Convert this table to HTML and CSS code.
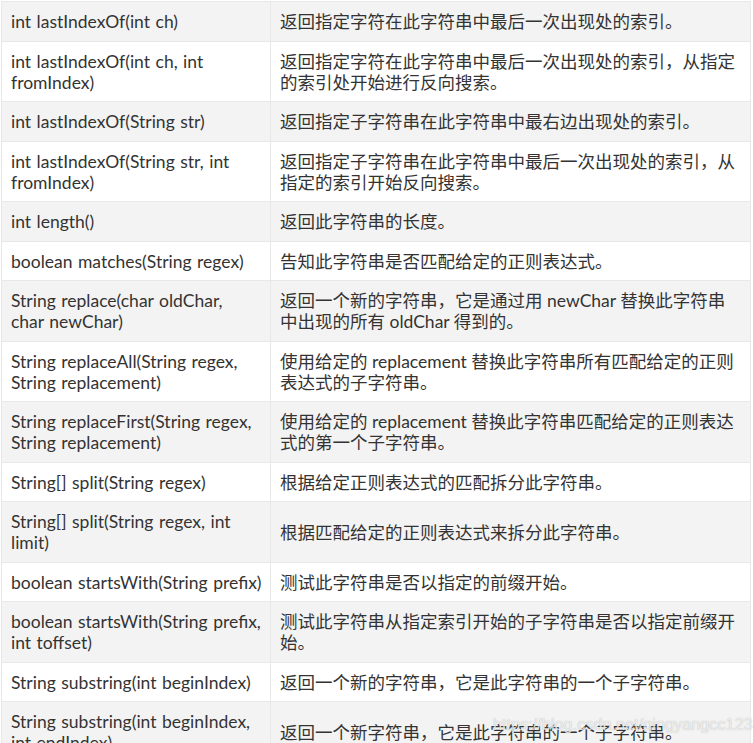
FILE: index.html
```html
<!DOCTYPE html>
<html lang="zh-CN">
<head>
    <meta charset="UTF-8">
    <title>String 方法</title>
    <link rel="stylesheet" href="styles.css">
</head>
<body>
    <div class="page">
        <table class="methods">
            <tbody>
                <tr><td>int lastIndexOf(int ch)</td><td>返回指定字符在此字符串中最后一次出现处的索引。</td></tr>
                <tr><td>int lastIndexOf(int ch, int<br>fromIndex)</td><td>返回指定字符在此字符串中最后一次出现处的索引，从指定的索引处开始进行反向搜索。</td></tr>
                <tr><td>int lastIndexOf(String str)</td><td>返回指定子字符串在此字符串中最右边出现处的索引。</td></tr>
                <tr><td>int lastIndexOf(String str, int<br>fromIndex)</td><td>返回指定子字符串在此字符串中最后一次出现处的索引，从指定的索引开始反向搜索。</td></tr>
                <tr><td>int length()</td><td>返回此字符串的长度。</td></tr>
                <tr><td>boolean matches(String regex)</td><td>告知此字符串是否匹配给定的正则表达式。</td></tr>
                <tr><td>String replace(char oldChar,<br>char newChar)</td><td>返回一个新的字符串，它是通过用 newChar 替换此字符串中出现的所有 oldChar 得到的。</td></tr>
                <tr><td>String replaceAll(String regex,<br>String replacement)</td><td>使用给定的 replacement 替换此字符串所有匹配给定的正则表达式的子字符串。</td></tr>
                <tr><td>String replaceFirst(String regex,<br>String replacement)</td><td>使用给定的 replacement 替换此字符串匹配给定的正则表达式的第一个子字符串。</td></tr>
                <tr><td>String[] split(String regex)</td><td>根据给定正则表达式的匹配拆分此字符串。</td></tr>
                <tr><td>String[] split(String regex, int<br>limit)</td><td>根据匹配给定的正则表达式来拆分此字符串。</td></tr>
                <tr><td>boolean startsWith(String prefix)</td><td>测试此字符串是否以指定的前缀开始。</td></tr>
                <tr><td>boolean startsWith(String prefix,<br>int toffset)</td><td>测试此字符串从指定索引开始的子字符串是否以指定前缀开始。</td></tr>
                <tr><td>String substring(int beginIndex)</td><td>返回一个新的字符串，它是此字符串的一个子字符串。</td></tr>
                <tr><td>String substring(int beginIndex,<br>int endIndex)</td><td>返回一个新字符串，它是此字符串的一个子字符串。</td></tr>
            </tbody>
        </table>
        <div class="watermark">https://blog.csdn.net/qingyangcc123</div>
    </div>
</body>
</html>
```

FILE: styles.css
```css
* {
    margin: 0;
    padding: 0;
    box-sizing: border-box;
}

html, body {
    height: 100%;
    overflow: hidden;
    background: #fff;
}

body {
    font-family: Lato, "Noto Sans CJK SC", sans-serif;
    font-size: 17.5px;
    line-height: 21px;
    color: #333;
}

.page {
    position: relative;
    height: 743px;
    padding: 1px 0 0 1px;
}

.methods {
    width: 750px;
    border-collapse: collapse;
    table-layout: fixed;
}

.methods td {
    border: 1px solid #e8e8e8;
    padding: 9px 9px 8.5px 9px;
    vertical-align: middle;
}

.methods td:first-child {
    width: 269px;
    white-space: nowrap;
    word-spacing: 1px;
}

.methods tr:nth-child(odd) td {
    background: #f3f3f3;
}

.methods tr:nth-child(even) td {
    background: #fff;
}

.watermark {
    position: absolute;
    left: 493px;
    top: 714px;
    font-family: "Liberation Sans", sans-serif;
    font-size: 16.3px;
    color: rgba(255, 255, 255, 0.75);
    text-shadow: 0 0 1px rgba(120, 120, 120, 0.6);
}
```
